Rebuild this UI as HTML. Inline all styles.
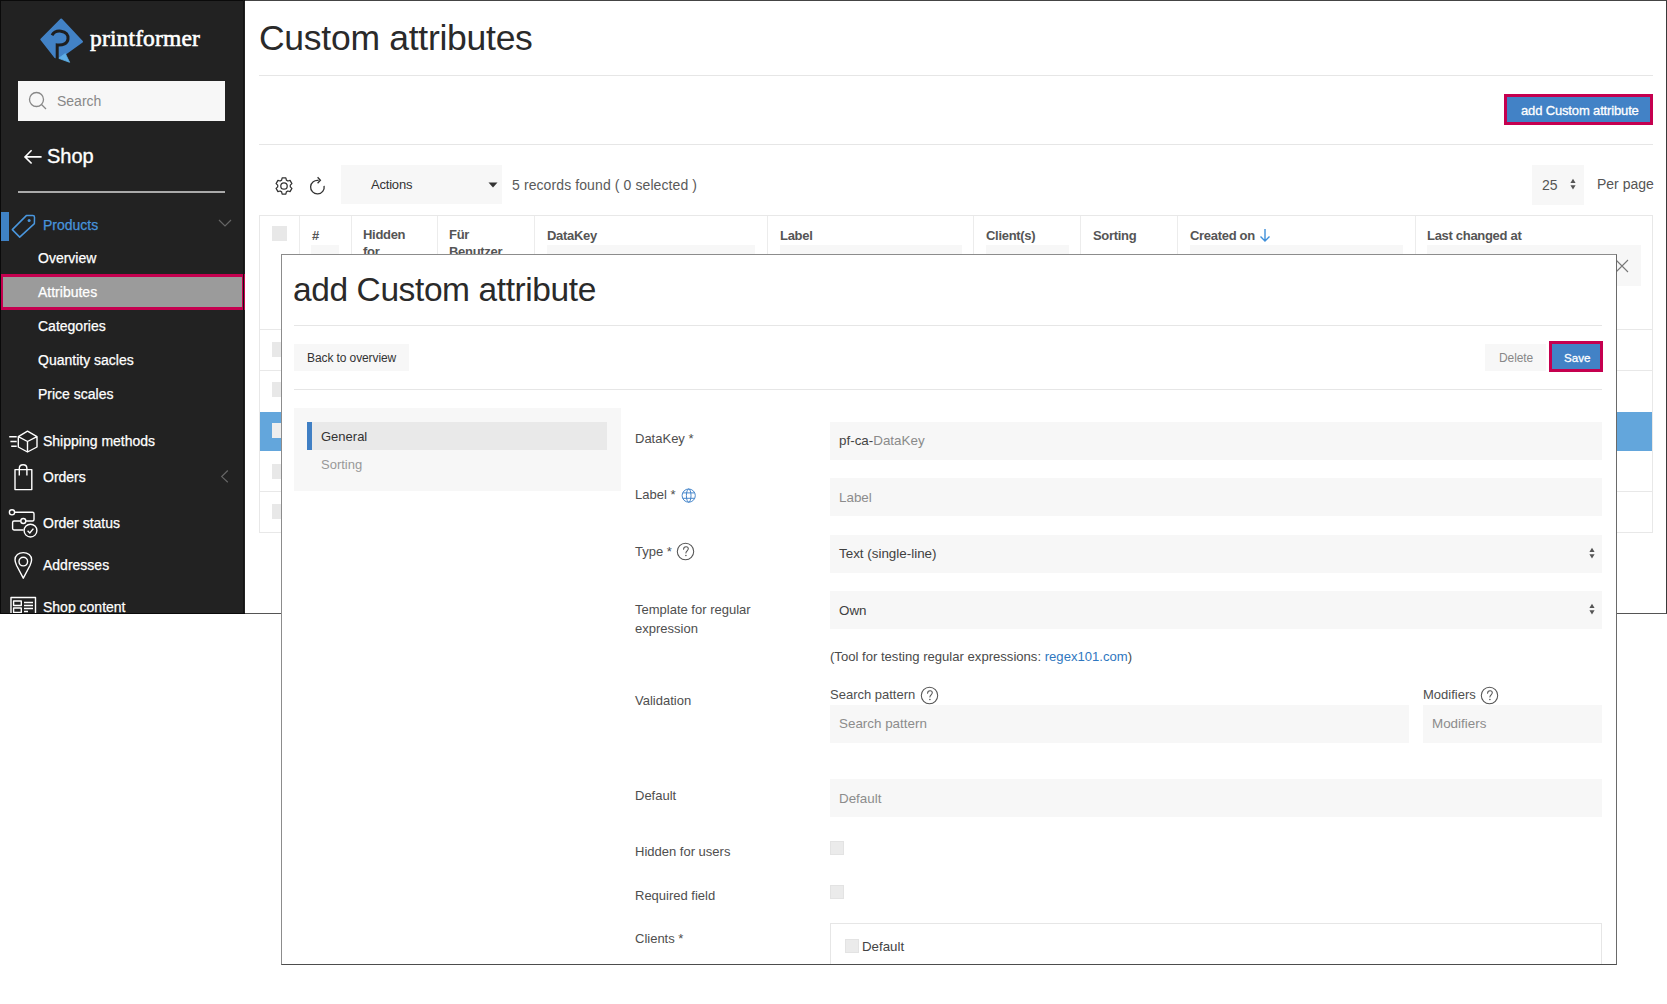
<!DOCTYPE html>
<html><head><meta charset="utf-8">
<style>
*{box-sizing:border-box;margin:0;padding:0}
html,body{width:1667px;height:1004px;overflow:hidden;background:#fff;font-family:"Liberation Sans",sans-serif;color:#333}
.a{position:absolute;white-space:nowrap}
#bg{position:absolute;left:0;top:0;width:1667px;height:614px;background:#fff;overflow:hidden}
#bgb{position:absolute;left:0;top:0;width:1667px;height:614px;border-top:1px solid #444;border-right:1px solid #3a3a3a;border-bottom:1px solid #555}
#side{position:absolute;left:0;top:0;width:245px;height:614px;background:#222222}
.nav{color:#fff;font-size:14px;-webkit-text-stroke:0.25px currentColor}
.hr{position:absolute;height:1px;background:#e6e6e6}
#modal{position:absolute;left:281px;top:254px;width:1336px;height:711px;background:#fff}
#mc{position:absolute;left:0;top:0;width:1617px;height:964px;overflow:hidden}
.lbl{font-size:13px;color:#4e4e4e}
.inp{position:absolute;background:#f7f7f7}
.ph{font-size:13.4px;color:#8c8c8c}
.th{font-size:13px;font-weight:bold;color:#555;letter-spacing:-0.3px}
.cb{position:absolute;width:15px;height:15px;background:#e8e8e8}
</style></head><body>
<div id="bg">
 <div id="side">
  <!-- logo -->
  <svg class="a" style="left:35px;top:12px" width="60" height="56" viewBox="0 0 60 56">
   <path d="M26.2 7.5 L47 29.8 L31 41.3 L23 46 L20 45 L6.3 27.5 Z" fill="#4282c6" stroke="#4282c6" stroke-width="2" stroke-linejoin="round"/>
   <path d="M23.6 46.3 L30.3 41.6 L34.6 50.3 Z" fill="#5eaee6" stroke="#5eaee6" stroke-width="0.8" stroke-linejoin="round"/>
   <path d="M17 23.3 C19 19.8 23 18.8 26 19.2 C31 19.8 33.5 23 33 27 C32.4 31.5 28 33.5 22.2 33 L22.2 47" fill="none" stroke="#1e1e1e" stroke-width="3"/>
  </svg>
  <div class="a" style="left:90px;top:25px;font-family:'Liberation Serif',serif;font-size:23.5px;color:#fff;-webkit-text-stroke:0.6px #fff;letter-spacing:0.15px">printformer</div>
  <!-- search -->
  <div class="a" style="left:18px;top:81px;width:207px;height:40px;background:#f7f7f7"></div>
  <svg class="a" style="left:28px;top:91px" width="20" height="20" viewBox="0 0 20 20"><circle cx="8.5" cy="8.5" r="7" fill="none" stroke="#888" stroke-width="1.3"/><path d="M13.5 13.5 L18 18" stroke="#888" stroke-width="1.3"/></svg>
  <div class="a" style="left:57px;top:93px;font-size:14px;color:#888">Search</div>
  <!-- shop -->
  <svg class="a" style="left:23px;top:148px" width="20" height="18" viewBox="0 0 20 18"><path d="M8.6 2.3 L2 8.9 L8.6 15.5 M2 8.9 L18.6 8.9" fill="none" stroke="#fff" stroke-width="1.6"/></svg>
  <div class="a" style="left:47px;top:145px;font-size:20px;color:#fff;-webkit-text-stroke:0.35px #fff">Shop</div>
  <div class="a" style="left:18px;top:191px;width:207px;height:2px;background:#aaa"></div>
  <!-- products -->
  <div class="a" style="left:1px;top:212px;width:8px;height:29px;background:#3f82c6"></div>
  <svg class="a" style="left:0;top:205px" width="45" height="40" viewBox="0 205 45 40"><path d="M26.3 215.6 L32.8 215.5 Q34.5 215.5 34.5 217.2 L34.4 223.6 L19.7 237.1 L12.3 229.6 Z" fill="none" stroke="#4a97de" stroke-width="1.5" stroke-linejoin="round"/><circle cx="29.1" cy="220.6" r="1.5" fill="#4a97de"/></svg>
  <div class="a nav" style="left:43px;top:217px;color:#4793dc">Products</div>
  <svg class="a" style="left:218px;top:219px" width="14" height="9" viewBox="0 0 14 9"><path d="M1 1 L7 7 L13 1" fill="none" stroke="#666" stroke-width="1.2"/></svg>
  <div class="a nav" style="left:38px;top:250px">Overview</div>
  <div class="a" style="left:0;top:274px;width:245px;height:36px;background:#9b9b9b;border:3px solid #c5004f"></div>
  <div class="a nav" style="left:38px;top:284px">Attributes</div>
  <div class="a nav" style="left:38px;top:318px">Categories</div>
  <div class="a nav" style="left:38px;top:352px">Quantity sacles</div>
  <div class="a nav" style="left:38px;top:386px">Price scales</div>
  <div class="a nav" style="left:43px;top:433px">Shipping methods</div>
  <div class="a nav" style="left:43px;top:469px">Orders</div>
  <div class="a nav" style="left:43px;top:515px">Order status</div>
  <div class="a nav" style="left:43px;top:557px">Addresses</div>
  <div class="a nav" style="left:43px;top:599px">Shop content</div>
  <svg class="a" style="left:0;top:420px" width="45" height="200" viewBox="0 420 45 200" fill="none" stroke="#fff" stroke-width="1.4" stroke-linejoin="round">
   <path d="M9.2 436.7 H16.7 M10.4 441.5 H16.7 M11.2 446.3 H16.7"/>
   <path d="M27.5 431.2 L37 436.7 L37 447 L27.5 452 L18.3 447 L18.3 436.7 Z M18.3 436.7 L27.5 441.5 L37 436.7 M27.5 441.5 L27.5 452"/>
   <path d="M15 469.6 H31.8 V489.6 H15 Z"/>
   <path d="M19.3 475.5 V468.5 C19.3 463.5 26.9 463.5 26.9 468.5 V475.5"/>
   <circle cx="12" cy="512.3" r="2.6"/>
   <path d="M14.6 512.3 H32.5 Q34 512.3 34 513.8 V519.5 Q34 521 32.5 521 H25.8 M20.7 521 H14 Q12.6 521 12.6 522.4 V528.6 Q12.6 530 14 530 H23.5"/>
   <circle cx="23.3" cy="521" r="2.5"/>
   <circle cx="30.5" cy="530.6" r="6.4"/>
   <path d="M27.6 530.8 L29.8 533 L33.4 528.6"/>
   <path d="M23.3 578.2 L16.6 565.5 C15.3 562.6 15 561.4 15 559.8 C15 555.4 18.7 552.6 23.3 552.6 C27.9 552.6 31.6 555.4 31.6 559.8 C31.6 561.4 31.3 562.6 30 565.5 Z"/>
   <circle cx="23.3" cy="561.6" r="4.3"/>
   <path d="M11 597.5 H35.5 V625 H11 Z M13.6 601 H21.3 V605.5 H13.6 Z M13.6 608 H21.3 V612.5 H13.6 Z M24 602.5 H33 M24 605.5 H33 M24 608.5 H33 M24 611.5 H28"/>
  </svg>
  <svg class="a" style="left:215px;top:465px" width="20" height="22" viewBox="215 465 20 22"><path d="M227.8 470.5 L221.7 476.6 L227.8 482.3" fill="none" stroke="#666" stroke-width="1.2"/></svg>
  </div>
 <!-- main -->
 <div class="a" style="left:259px;top:18px;font-size:35.5px;color:#2a2a2a;letter-spacing:-0.27px">Custom attributes</div>
 <div class="hr" style="left:259px;top:75px;width:1394px"></div>
 <div class="a" style="left:1504px;top:94px;width:149px;height:31px;background:#4282c6;border:3px solid #c5004f"></div>
 <div class="a" style="left:1521px;top:103px;font-size:13px;color:#fff;letter-spacing:-0.15px;-webkit-text-stroke:0.3px #fff">add Custom attribute</div>
 <div class="hr" style="left:259px;top:144px;width:1394px"></div>
 <!-- toolbar -->
 <div class="a" style="left:341px;top:165px;width:161px;height:39px;background:#f7f7f7"></div>
 <div class="a" style="left:371px;top:177px;font-size:13px;color:#333;letter-spacing:-0.2px">Actions</div>
 <div class="a" style="left:512px;top:177px;font-size:14px;color:#5a5a5a;letter-spacing:0.1px">5 records found ( 0 selected )</div>
 <div class="a" style="left:1532px;top:165px;width:52px;height:40px;background:#f7f7f7"></div>
 <div class="a" style="left:1542px;top:177px;font-size:14px;color:#555">25</div>
 <div class="a" style="left:1597px;top:176px;font-size:14px;color:#555">Per page</div>
 <!-- table -->
 <div class="a" style="left:259px;top:215px;width:1394px;height:318px;border:1px solid #e8e8e8"></div>
 <div class="a" style="left:260px;top:412px;width:1392px;height:39px;background:#63a6dc"></div>
 <div class="hr" style="left:260px;top:329px;width:1392px;background:#e8e8e8"></div>
 <div class="hr" style="left:260px;top:370px;width:1392px;background:#e8e8e8"></div>
 <div class="hr" style="left:260px;top:491px;width:1392px;background:#e8e8e8"></div>
 <div class="a" style="left:299px;top:216px;width:1px;height:113px;background:#ececec"></div>
 <div class="a" style="left:351px;top:216px;width:1px;height:113px;background:#ececec"></div>
 <div class="a" style="left:437px;top:216px;width:1px;height:113px;background:#ececec"></div>
 <div class="a" style="left:534px;top:216px;width:1px;height:113px;background:#ececec"></div>
 <div class="a" style="left:767px;top:216px;width:1px;height:113px;background:#ececec"></div>
 <div class="a" style="left:973px;top:216px;width:1px;height:113px;background:#ececec"></div>
 <div class="a" style="left:1080px;top:216px;width:1px;height:113px;background:#ececec"></div>
 <div class="a" style="left:1177px;top:216px;width:1px;height:113px;background:#ececec"></div>
 <div class="a" style="left:1415px;top:216px;width:1px;height:113px;background:#ececec"></div>
 <div class="cb" style="left:272px;top:226px"></div>
 <div class="cb" style="left:272px;top:342px"></div>
 <div class="cb" style="left:272px;top:382px"></div>
 <div class="cb" style="left:272px;top:423px;background:#eeeeee"></div>
 <div class="cb" style="left:272px;top:464px"></div>
 <div class="cb" style="left:272px;top:504px"></div>
 <div class="th a" style="left:312px;top:228px">#</div>
 <div class="th a" style="left:363px;top:226px;line-height:17px">Hidden<br>for</div>
 <div class="th a" style="left:449px;top:226px;line-height:17px">Für<br>Benutzer</div>
 <div class="th a" style="left:547px;top:228px">DataKey</div>
 <div class="th a" style="left:780px;top:228px">Label</div>
 <div class="th a" style="left:986px;top:228px">Client(s)</div>
 <div class="th a" style="left:1093px;top:228px">Sorting</div>
 <div class="th a" style="left:1190px;top:228px">Created on</div>
 <div class="th a" style="left:1427px;top:228px">Last changed at</div>
 <svg class="a" style="left:1259px;top:228px" width="12" height="15" viewBox="0 0 12 15"><path d="M6 1 L6 13 M1.5 8.5 L6 13 L10.5 8.5" fill="none" stroke="#3f8fd9" stroke-width="1.4"/></svg>
 <div class="inp" style="left:311px;top:245px;width:28px;height:41px"></div>
 <div class="inp" style="left:547px;top:245px;width:208px;height:41px"></div>
 <div class="inp" style="left:780px;top:245px;width:182px;height:41px"></div>
 <div class="inp" style="left:986px;top:245px;width:83px;height:41px"></div>
 <div class="inp" style="left:1190px;top:245px;width:213px;height:41px"></div>
 <div class="inp" style="left:1427px;top:245px;width:214px;height:41px"></div>
 <svg class="a" style="left:1615px;top:259px" width="14" height="14" viewBox="0 0 14 14"><path d="M1 1 L13 13 M13 1 L1 13" stroke="#777" stroke-width="1.1"/></svg>
 <!-- toolbar icons -->
 <svg class="a" style="left:273.6px;top:175.6px" width="20" height="20" viewBox="-0.4 -0.4 20.8 20.8" fill="none" stroke="#333" stroke-width="1.3" stroke-linejoin="round"><path d="M7.53 3.88 L8.07 1.62 L11.93 1.62 L12.47 3.88 L14.06 4.80 L16.29 4.13 L18.22 7.49 L16.54 9.08 L16.54 10.92 L18.22 12.51 L16.29 15.87 L14.06 15.20 L12.47 16.12 L11.93 18.38 L8.07 18.38 L7.53 16.12 L5.94 15.20 L3.71 15.87 L1.78 12.51 L3.46 10.92 L3.46 9.08 L1.78 7.49 L3.71 4.13 L5.94 4.80 Z"/><circle cx="10" cy="10" r="3.35"/></svg>
 <svg class="a" style="left:307px;top:175px" width="22" height="22" viewBox="307 175 22 22" fill="none" stroke="#333" stroke-width="1.3"><path d="M324.1 185.9 A6.8 6.8 0 1 1 318.6 180.4"/><path d="M317.6 177.2 L320.4 180.3 L317.6 183.2"/></svg>
 <svg class="a" style="left:487px;top:181px" width="12" height="8" viewBox="0 0 12 8"><path d="M1.5 1.5 L10.5 1.5 L6 6.5 Z" fill="#333"/></svg>
 <svg class="a" style="left:1569px;top:178px" width="8" height="13" viewBox="0 0 8 13"><path d="M4 0.8 L6.6 5.1 L1.4 5.1 Z M4 11.6 L6.6 7.3 L1.4 7.3 Z" fill="#555"/></svg>
</div>
<div id="bgb"></div>
<div class="a" style="left:0;top:0;width:245px;height:1px;background:#0a0a0a"></div>
<div class="a" style="left:0;top:0;width:1px;height:614px;background:#0a0a0a"></div>
<div class="a" style="left:243px;top:0;width:1px;height:613px;background:#141414"></div>
<div class="a" style="left:0;top:613px;width:245px;height:1px;background:#0a0a0a"></div>
<div id="modal"></div>
<div id="mc">
 <div class="a" style="left:293px;top:271px;font-size:33.5px;color:#2a2a2a;letter-spacing:-0.4px">add Custom attribute</div>
 <div class="hr" style="left:294px;top:325px;width:1308px"></div>
 <div class="a" style="left:294px;top:344px;width:115px;height:27px;background:#f7f7f7"></div>
 <div class="a" style="left:307px;top:351px;font-size:12px;color:#333;letter-spacing:-0.1px">Back to overview</div>
 <div class="a" style="left:1485px;top:344px;width:61px;height:27px;background:#f7f7f7"></div>
 <div class="a" style="left:1499px;top:351px;font-size:12px;color:#888;letter-spacing:-0.1px">Delete</div>
 <div class="a" style="left:1549px;top:341px;width:54px;height:31px;background:#4282c6;border:3px solid #c5004f"></div>
 <div class="a" style="left:1564px;top:351px;font-size:11.6px;color:#fff;-webkit-text-stroke:0.3px #fff">Save</div>
 <div class="hr" style="left:294px;top:389px;width:1308px"></div>
 <!-- left nav -->
 <div class="a" style="left:294px;top:408px;width:327px;height:83px;background:#f7f7f7"></div>
 <div class="a" style="left:307px;top:422px;width:300px;height:28px;background:#e9e9e9"></div>
 <div class="a" style="left:307px;top:422px;width:5px;height:28px;background:#3f7fc4"></div>
 <div class="a" style="left:321px;top:429px;font-size:13px;color:#333">General</div>
 <div class="a" style="left:321px;top:457px;font-size:13px;color:#999">Sorting</div>
 <!-- form -->
 <div class="a lbl" style="left:635px;top:431px">DataKey *</div>
 <div class="inp" style="left:830px;top:422px;width:772px;height:38px"></div>
 <div class="a" style="left:839px;top:433px;font-size:13.4px;color:#444">pf-ca-<span style="color:#8a8a8a">DataKey</span></div>
 <div class="a lbl" style="left:635px;top:487px">Label *</div>
 <svg class="a" style="left:681px;top:488px" width="16" height="16" viewBox="0 0 16 16"><g fill="none" stroke="#3f82c8" stroke-width="0.95"><circle cx="7.7" cy="7.6" r="6.6"/><ellipse cx="7.7" cy="7.6" rx="2.3" ry="6.6"/><path d="M1.9 4.9 H13.5 M1.9 10.3 H13.5"/></g></svg>
 <div class="inp" style="left:830px;top:478px;width:772px;height:38px"></div>
 <div class="a ph" style="left:839px;top:490px">Label</div>
 <div class="a lbl" style="left:635px;top:544px">Type *</div>
 <svg class="a" style="left:675.6px;top:542.4px" width="19" height="19" viewBox="0 0 19 19"><circle cx="9.5" cy="9.5" r="8.2" fill="none" stroke="#555" stroke-width="1.05"/><path d="M7.6 7.2 C7.6 5.6 8.9 4.8 10.1 4.8 C11.4 4.8 12.3 5.7 12.3 6.8 C12.3 8.3 9.9 9.3 9.9 10.9" fill="none" stroke="#555" stroke-width="1.05" stroke-linecap="round"/><circle cx="9.9" cy="13.5" r="0.8" fill="#555"/></svg>
 <div class="inp" style="left:830px;top:535px;width:772px;height:38px"></div>
 <div class="a" style="left:839px;top:546px;font-size:13.4px;color:#404040">Text (single-line)</div>
 <svg class="a" style="left:1587.5px;top:547px" width="8" height="13" viewBox="0 0 8 13"><path d="M4 0.8 L6.6 5.1 L1.4 5.1 Z M4 11.6 L6.6 7.3 L1.4 7.3 Z" fill="#555"/></svg>
 <div class="a lbl" style="left:635px;top:600px;line-height:19px">Template for regular<br>expression</div>
 <div class="inp" style="left:830px;top:591px;width:772px;height:38px"></div>
 <div class="a" style="left:839px;top:603px;font-size:13.4px;color:#404040">Own</div>
 <svg class="a" style="left:1587.5px;top:603px" width="8" height="13" viewBox="0 0 8 13"><path d="M4 0.8 L6.6 5.1 L1.4 5.1 Z M4 11.6 L6.6 7.3 L1.4 7.3 Z" fill="#555"/></svg>
 <div class="a" style="left:830px;top:649px;font-size:13.1px;color:#4a4a4a">(Tool for testing regular expressions: <span style="color:#2f77c0">regex101.com</span>)</div>
 <div class="a lbl" style="left:635px;top:693px">Validation</div>
 <div class="a lbl" style="left:830px;top:687px">Search pattern</div>
 <svg class="a" style="left:920px;top:686px" width="19" height="19" viewBox="0 0 19 19"><circle cx="9.5" cy="9.5" r="8.2" fill="none" stroke="#555" stroke-width="1.05"/><path d="M7.6 7.2 C7.6 5.6 8.9 4.8 10.1 4.8 C11.4 4.8 12.3 5.7 12.3 6.8 C12.3 8.3 9.9 9.3 9.9 10.9" fill="none" stroke="#555" stroke-width="1.05" stroke-linecap="round"/><circle cx="9.9" cy="13.5" r="0.8" fill="#555"/></svg>
 <div class="inp" style="left:830px;top:705px;width:579px;height:38px"></div>
 <div class="a ph" style="left:839px;top:716px">Search pattern</div>
 <div class="a lbl" style="left:1423px;top:687px">Modifiers</div>
 <svg class="a" style="left:1480px;top:686px" width="19" height="19" viewBox="0 0 19 19"><circle cx="9.5" cy="9.5" r="8.2" fill="none" stroke="#555" stroke-width="1.05"/><path d="M7.6 7.2 C7.6 5.6 8.9 4.8 10.1 4.8 C11.4 4.8 12.3 5.7 12.3 6.8 C12.3 8.3 9.9 9.3 9.9 10.9" fill="none" stroke="#555" stroke-width="1.05" stroke-linecap="round"/><circle cx="9.9" cy="13.5" r="0.8" fill="#555"/></svg>
 <div class="inp" style="left:1423px;top:705px;width:179px;height:38px"></div>
 <div class="a ph" style="left:1432px;top:716px">Modifiers</div>
 <div class="a lbl" style="left:635px;top:788px">Default</div>
 <div class="inp" style="left:830px;top:779px;width:772px;height:38px"></div>
 <div class="a ph" style="left:839px;top:791px">Default</div>
 <div class="a lbl" style="left:635px;top:844px">Hidden for users</div>
 <div class="cb" style="left:830px;top:841px;width:14px;height:14px;border:1px solid #e3e3e3;background:#ebebeb"></div>
 <div class="a lbl" style="left:635px;top:888px">Required field</div>
 <div class="cb" style="left:830px;top:885px;width:14px;height:14px;border:1px solid #e3e3e3;background:#ebebeb"></div>
 <div class="a lbl" style="left:635px;top:931px">Clients *</div>
 <div class="a" style="left:830px;top:923px;width:772px;height:60px;border:1px solid #e6e6e6"></div>
 <div class="cb" style="left:845px;top:939px;width:14px;height:14px;border:1px solid #e3e3e3;background:#ebebeb"></div>
 <div class="a" style="left:862px;top:939px;font-size:13.3px;color:#444">Default</div>
</div>
<div class="a" style="left:281px;top:254px;width:1336px;height:711px;border:1.5px solid #8c8c8c;border-right-color:#6a6a6a;border-bottom-color:#4d4d4d"></div>
</body></html>
